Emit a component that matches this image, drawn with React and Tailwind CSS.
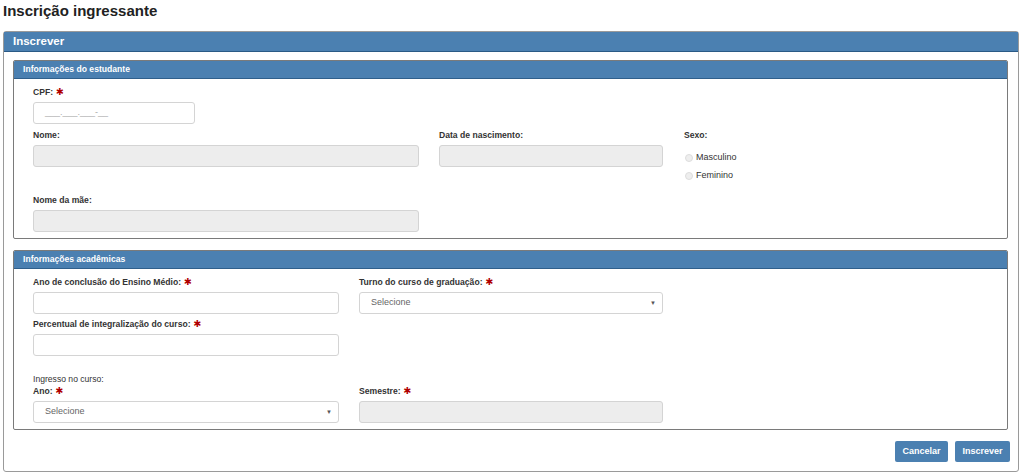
import React from "react";

const Req = () => (
  <span className="ml-[3px] text-[#b00000] text-[9.5px]" style={{ fontFamily: '"DejaVu Sans", sans-serif' }}>✱</span>
);

const Label = ({ children, req, normal }) => (
  <div className={`h-[12px] leading-[12px] text-[8.6px] text-[#333] ${normal ? "font-normal" : "font-bold"}`}>
    {children}
    {req && <Req />}
  </div>
);

const Input = ({ disabled, placeholder, w }) => (
  <div
    className={`h-[22px] rounded-[3px] border border-[#d4d4d4] flex items-center px-[11px] text-[9px] text-[#aaa] ${disabled ? "bg-[#ededed]" : "bg-white"}`}
    style={{ width: w }}
  >
    {placeholder}
  </div>
);

const Select = ({ w }) => (
  <div
    className="h-[22px] rounded-[3px] border border-[#d4d4d4] bg-white flex items-center justify-between pl-[11px] pr-[6px] text-[9px] text-[#666]"
    style={{ width: w }}
  >
    <span>Selecione</span>
    <span className="text-[6px] text-[#555]">▼</span>
  </div>
);

const Radio = ({ label }) => (
  <div className="flex items-center h-[14px] gap-[3px]">
    <span className="w-[8px] h-[8px] rounded-full border border-[#ddd] bg-[#eee]" />
    <span className="text-[9px] text-[#333]">{label}</span>
  </div>
);

const Panel = ({ title, children }) => (
  <div className="border border-[#7a7a7a] rounded-[2px] bg-white">
    <div className="h-[18px] bg-[#4b80b1] border-b border-[#2f5f8b] flex items-center pl-[9px] text-white font-bold text-[8.6px] rounded-t-[1px]">
      {title}
    </div>
    {children}
  </div>
);

export default function App() {
  return (
    <div className="w-[1023px] h-[475px] bg-white text-[#333]" style={{ fontFamily: '"Liberation Sans", Arial, sans-serif' }}>
      <div className="h-[31px] pl-[3px] pt-[1px] text-[15px] font-bold text-[#222] leading-[20px]">Inscrição ingressante</div>
      <div className="ml-[3px] mr-[4px] border border-[#9a9a9a] rounded-[3px]">
        <div className="h-[20px] bg-[#4b80b1] border-b border-[#2a5a86] flex items-center pl-[9px] text-white font-bold text-[11.5px]">
          Inscrever
        </div>
        <div className="pl-[9px] pr-[10px] pt-[8px] flex flex-col">
          <Panel title="Informações do estudante">
            <div className="pl-[19px] pt-[7px] pb-[6px] flex flex-col">
              <Label req>CPF:</Label>
              <div className="mt-[4px]">
                <Input w={162} placeholder="___.___.___-__" />
              </div>
              <div className="mt-[5px] flex">
                <div className="w-[406px]">
                  <Label>Nome:</Label>
                  <div className="mt-[4px]"><Input w={386} disabled /></div>
                </div>
                <div className="w-[245px]">
                  <Label>Data de nascimento:</Label>
                  <div className="mt-[4px]"><Input w={224} disabled /></div>
                </div>
                <div>
                  <Label>Sexo:</Label>
                  <div className="mt-[10px] flex flex-col gap-[4px] pl-[1px]">
                    <Radio label="Masculino" />
                    <Radio label="Feminino" />
                  </div>
                </div>
              </div>
              <div className="mt-[11px]">
                <Label>Nome da mãe:</Label>
                <div className="mt-[4px]"><Input w={386} disabled /></div>
              </div>
            </div>
          </Panel>
          <div className="mt-[11px]">
            <Panel title="Informações acadêmicas">
              <div className="pl-[19px] pt-[7px] pb-[6px] flex flex-col">
                <div className="flex">
                  <div className="w-[326px]">
                    <Label req>Ano de conclusão do Ensino Médio:</Label>
                    <div className="mt-[4px]"><Input w={306} /></div>
                  </div>
                  <div>
                    <Label req>Turno do curso de graduação:</Label>
                    <div className="mt-[4px]"><Select w={304} /></div>
                  </div>
                </div>
                <div className="mt-[4px]">
                  <Label req>Percentual de integralização do curso:</Label>
                  <div className="mt-[4px]"><Input w={306} /></div>
                </div>
                <div className="mt-[17px]">
                  <Label normal>Ingresso no curso:</Label>
                </div>
                <div className="flex">
                  <div className="w-[326px]">
                    <Label req>Ano:</Label>
                    <div className="mt-[4px]"><Select w={306} /></div>
                  </div>
                  <div>
                    <Label req>Semestre:</Label>
                    <div className="mt-[4px]"><Input w={304} disabled /></div>
                  </div>
                </div>
              </div>
            </Panel>
          </div>
          <div className="flex justify-end gap-[7px] mt-[11px] mb-[9px] mr-[-2px]">
            <button className="h-[21px] w-[53px] rounded-[2px] bg-[#4b80b1] text-white font-bold text-[9px]">Cancelar</button>
            <button className="h-[21px] w-[55px] rounded-[2px] bg-[#4b80b1] text-white font-bold text-[9px]">Inscrever</button>
          </div>
        </div>
      </div>
    </div>
  );
}
